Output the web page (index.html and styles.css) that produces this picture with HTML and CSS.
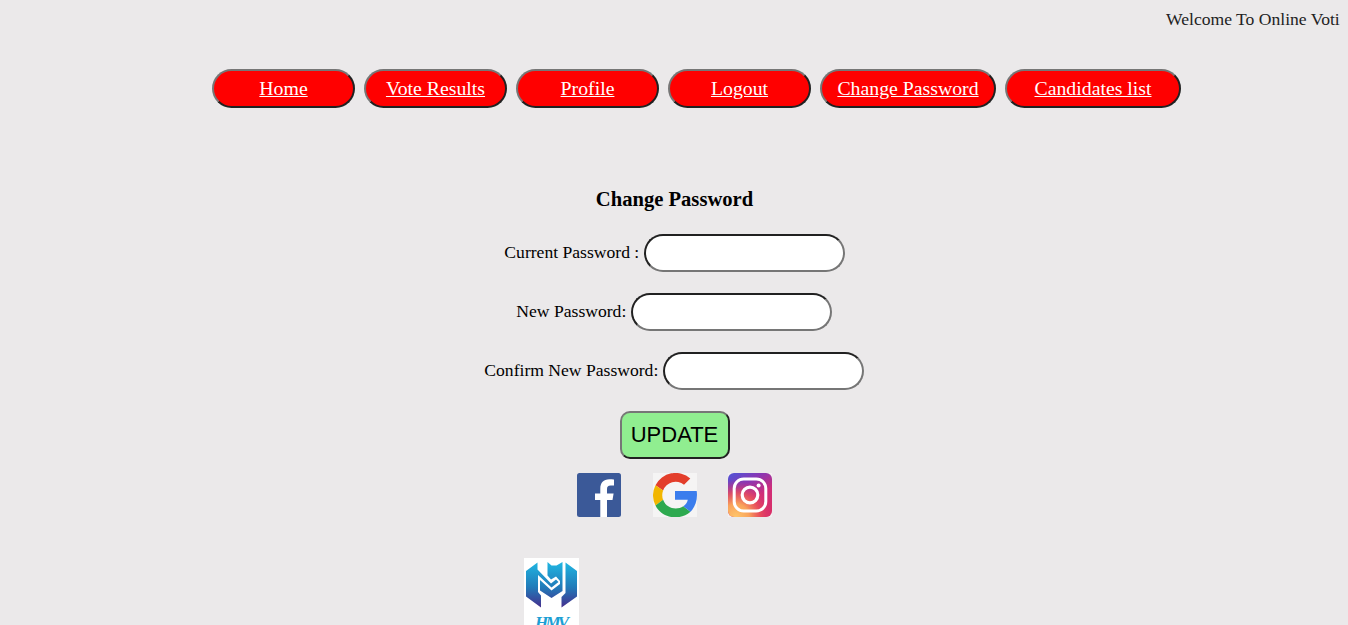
FILE: index.html
```html
<!DOCTYPE html>
<html lang="en">
<head>
<meta charset="utf-8">
<title>Change Password</title>
<link rel="stylesheet" href="styles.css">
</head>
<body>
<div class="ticker"><span>Welcome To Online Voti</span></div>
<nav class="nav">
  <a class="tab" href="#">Home</a>
  <a class="tab" href="#">Vote Results</a>
  <a class="tab" href="#">Profile</a>
  <a class="tab" href="#">Logout</a>
  <a class="tab wide" href="#">Change Password</a>
  <a class="tab wide" href="#">Candidates list</a>
</nav>
<form class="form">
  <h3 class="title">Change Password</h3>
  <div class="row first"><label for="current">Current Password :</label><input class="field" id="current" type="password"></div>
  <div class="row"><label for="new">New Password:</label><input class="field" id="new" type="password"></div>
  <div class="row"><label for="confirm">Confirm New Password:</label><input class="field" id="confirm" type="password"></div>
  <button class="update" type="button">UPDATE</button>
</form>
<div class="social">
  <svg width="44" height="44" viewBox="0 0 44 44">
    <rect width="44" height="44" rx="2.5" fill="#3b5998"/>
    <path fill="#fff" d="M23.300 44V27H18v-6.600h5.300v-4.700C23.300 9.700 26.500 6.300 32.300 6.300c2 0 3.700.1 4.700.3v6h-3.300c-2.800 0-3.700 1.200-3.700 3.600v4.200h6.600L35.500 27H30v17z"/>
  </svg>
  <svg width="44" height="44" viewBox="0 0 44 44">
    <rect width="44" height="44" fill="#f5f4f4"/>
    <path fill="#e33e2b" d="M2.500 12.300A22.500 22.500 0 0 1 37.300 5.400L31 11.700A13.500 13.500 0 0 0 10.100 17.500z"/>
    <path fill="#f2b600" d="M2.500 12.300L10.100 17.500a13.500 13.500 0 0 0 0 9.300L2.500 32.400a22.500 22.500 0 0 1 0-20.100z"/>
    <path fill="#2da94f" d="M2.500 32.400L10.100 26.800C13.500 36 24 37.500 30.300 33.300l7.200 5.500C26 48.500 8.500 45 2.500 32.400z"/>
    <path fill="#3b7ded" d="M22 18h21.700c1.200 8.500-1.500 16-6.200 20.800l-7.200-5.500c2.400-1.500 3.900-3.800 4.500-6.500H22z"/>
  </svg>
  <svg width="44" height="44" viewBox="0 0 44 44">
    <defs>
      <linearGradient id="ig-base" x1=".2" y1="0" x2=".8" y2="1"><stop offset="0" stop-color="#5a4fd0"/><stop offset=".25" stop-color="#8737b5"/><stop offset=".6" stop-color="#d02d79"/><stop offset="1" stop-color="#d92f67"/></linearGradient>
      <radialGradient id="ig-warm" cx=".18" cy="1" r=".85"><stop offset="0" stop-color="#ffc66a"/><stop offset=".35" stop-color="#f9a35b"/><stop offset=".65" stop-color="#ec5358" stop-opacity=".8"/><stop offset="1" stop-color="#d52c75" stop-opacity="0"/></radialGradient>
    </defs>
    <rect width="44" height="44" fill="#f3f0f1"/>
    <rect width="44" height="44" rx="6" fill="url(#ig-base)"/>
    <rect width="44" height="44" rx="6" fill="url(#ig-warm)"/>
    <rect x="6.200" y="6" width="31.600" height="32" rx="9.500" fill="none" stroke="#fff" stroke-width="3"/>
    <circle cx="22" cy="22" r="7.800" fill="none" stroke="#fff" stroke-width="3.200"/>
    <circle cx="30.600" cy="12.500" r="2" fill="#fff"/>
  </svg>
</div>
<div class="brand">
  <svg width="55" height="67" viewBox="0 0 55 67">
    <defs><linearGradient id="mark" gradientUnits="userSpaceOnUse" x1="0" y1="4" x2="0" y2="50"><stop offset="0" stop-color="#20b6e2"/><stop offset=".55" stop-color="#217bb9"/><stop offset="1" stop-color="#472c8c"/></linearGradient></defs>
    <rect width="55" height="67" fill="#fff"/>
    <g fill="url(#mark)">
      <path d="M2 13L13.500 4.500V11.500L27 25.500l5-4 2.500 2.500L27.500 29.500 14 17V34L17 37.500V49.500L2 38.500z"/>
      <path d="M23.500 4L27.500 7.500h5L38.500 4V33L27.500 40 16 32.500V22L27.500 32.500 36 26V23l-4-4.500-5 3-3.500-4z"/>
      <path d="M41.500 4.500L53 13V38.500L37.500 49.500V39L41.500 35z"/>
    </g>
    <text class="brand-name" x="28" y="70" text-anchor="middle" textLength="34">HMV</text>
  </svg>
</div>
</body>
</html>
```
FILE: styles.css
```css
* { box-sizing: border-box; }
body {
  margin: 0;
  height: 625px;
  overflow: hidden;
  background: #ebe9ea;
  color: #000;
  font-family: "Liberation Serif", "Times New Roman", serif;
  font-size: 17.6px;
}
.ticker {
  height: 69px;
  padding: 9px 0 0 1166px;
  line-height: 20px;
  white-space: nowrap;
  color: #222;
}
.nav { display: flex; gap: 9px; padding-left: 212px; }
.tab {
  width: 143px;
  height: 39px;
  border: 2px solid;
  border-color: #767676 #212121 #212121 #767676;
  border-radius: 20px;
  background: #f00;
  color: #fff;
  font-size: 19.8px;
  line-height: 34px;
  text-align: center;
  white-space: nowrap;
}
.wide { width: 176px; }
.form { display: flex; flex-direction: column; align-items: center; padding-top: 79px; }
.title { margin: 0 0 23px; padding-left: 1px; font-size: 20.6px; line-height: 24px; }
.row { display: flex; align-items: center; gap: 4.4px; height: 38px; margin-bottom: 21px; }
.row label { padding-bottom: 2px; }
.first { padding-left: 1px; }
.field {
  width: 201px;
  height: 38px;
  border: 2px solid;
  border-color: #212121 #767676 #767676 #212121;
  border-radius: 20px;
  background: #fff;
}
.update {
  width: 110px;
  height: 48px;
  margin-left: 1px;
  padding: 0;
  border: 2px solid;
  border-color: #767676 #212121 #212121 #767676;
  border-radius: 10px;
  background: #90ee90;
  color: #000;
  font-family: "Liberation Sans", Arial, sans-serif;
  font-size: 22px;
}
.social { display: flex; gap: 31.500px; padding: 14px 0 0 577px; }
.social svg, .brand svg { display: block; }
.brand { padding: 41px 0 0 524px; }
.brand-name { fill: #1d9fd4; font: italic bold 17px "Liberation Serif", serif; }
```
